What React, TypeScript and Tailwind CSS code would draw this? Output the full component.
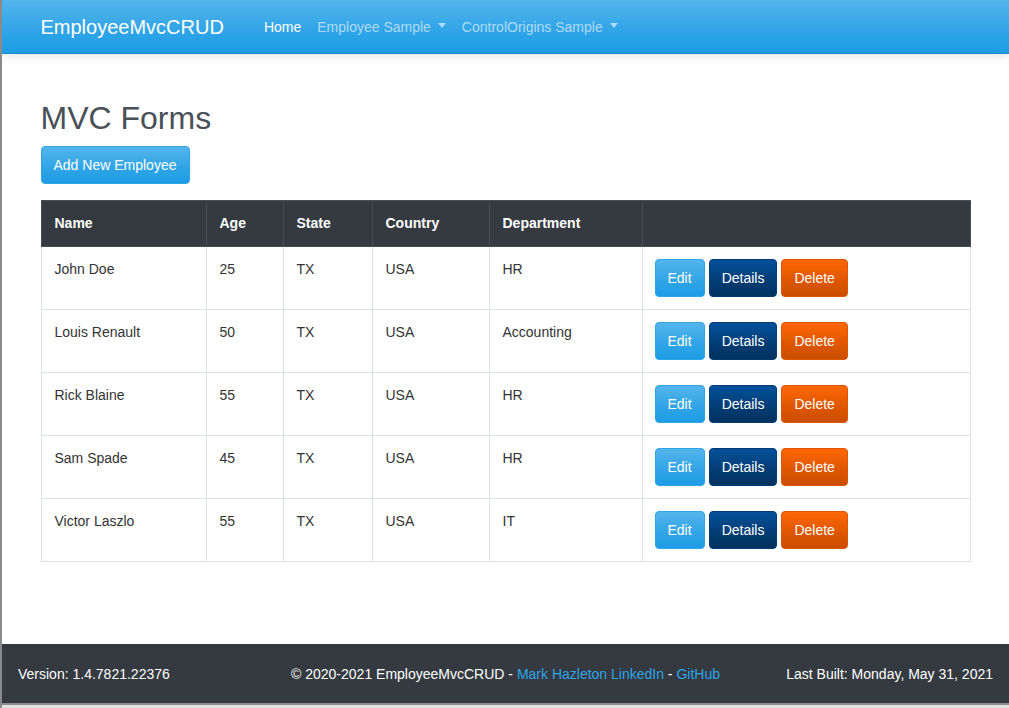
import React from 'react';

const employees = [
  { name: 'John Doe', age: 25, state: 'TX', country: 'USA', department: 'HR' },
  { name: 'Louis Renault', age: 50, state: 'TX', country: 'USA', department: 'Accounting' },
  { name: 'Rick Blaine', age: 55, state: 'TX', country: 'USA', department: 'HR' },
  { name: 'Sam Spade', age: 45, state: 'TX', country: 'USA', department: 'HR' },
  { name: 'Victor Laszlo', age: 55, state: 'TX', country: 'USA', department: 'IT' },
];

const columns = [
  { label: 'Name', w: 'w-[165px]' },
  { label: 'Age', w: 'w-[77px]' },
  { label: 'State', w: 'w-[89px]' },
  { label: 'Country', w: 'w-[117px]' },
  { label: 'Department', w: 'w-[153px]' },
  { label: '', w: '' },
];

function Caret() {
  return (
    <span className="ml-[7px] inline-block h-0 w-0 translate-y-[-2px] border-x-[4.5px] border-t-[5px] border-x-transparent border-t-white/60 align-middle" />
  );
}

function Btn({
  kind,
  wide,
  children,
}: {
  kind: 'primary' | 'info' | 'warning';
  wide?: boolean;
  children: React.ReactNode;
}) {
  const styles = {
    primary: 'border-[#2fa4e7] bg-[linear-gradient(#54b4eb,#2fa4e7_60%,#1d9ce5)]',
    info: 'border-[#033c73] bg-[linear-gradient(#04519b,#033c73_60%,#02325f)]',
    warning: 'border-[#dd5600] bg-[linear-gradient(#ff6707,#dd5600_60%,#c94e00)]',
  };
  return (
    <button
      className={`inline-flex h-[38px] items-center rounded-[4px] border text-[14px] leading-[21px] text-white ${
        wide ? 'pl-[12px] pr-[13px]' : 'px-3'
      } ${styles[kind]}`}
    >
      {children}
    </button>
  );
}

function Navbar() {
  return (
    <nav className="relative z-10 h-[54px] border-b border-[#178acc] bg-[linear-gradient(#54b4eb,#2fa4e7_60%,#1d9ce5)] shadow-[0_2px_10px_rgba(0,0,0,0.12)]">
      <div className="mx-auto flex h-full w-[960px] items-center px-[15px] pt-[1px]">
        <span className="mr-[40px] text-[20px] leading-[30px] text-white">EmployeeMvcCRUD</span>
        <span className="text-[14px] text-white">Home</span>
        <span className="ml-[16px] text-[14px] text-white/60">
          Employee Sample
          <Caret />
        </span>
        <span className="ml-[16px] text-[14px] text-white/60">
          ControlOrigins Sample
          <Caret />
        </span>
      </div>
    </nav>
  );
}

function EmployeeTable() {
  return (
    <table className="w-full table-fixed border-collapse text-[14px] leading-[21px]">
      <thead>
        <tr className="bg-[#343a40] text-white">
          {columns.map((c, i) => (
            <th key={i} className={`${c.w} border border-[#454d55] px-[13px] py-3 text-left font-bold`}>
              {c.label}
            </th>
          ))}
        </tr>
      </thead>
      <tbody>
        {employees.map((e) => (
          <tr key={e.name} className="text-[#333]">
            <td className="border border-[#dee2e6] px-[13px] py-3 align-top">{e.name}</td>
            <td className="border border-[#dee2e6] px-[13px] py-3 align-top">{e.age}</td>
            <td className="border border-[#dee2e6] px-[13px] py-3 align-top">{e.state}</td>
            <td className="border border-[#dee2e6] px-[13px] py-3 align-top">{e.country}</td>
            <td className="border border-[#dee2e6] px-[13px] py-3 align-top">{e.department}</td>
            <td className="border border-[#dee2e6] px-[12px] py-3 align-top">
              <div className="flex gap-[4px]">
                <Btn kind="primary">Edit</Btn>
                <Btn kind="info">Details</Btn>
                <Btn kind="warning">Delete</Btn>
              </div>
            </td>
          </tr>
        ))}
      </tbody>
    </table>
  );
}

export default function App() {
  return (
    <div
      className="flex h-[708px] w-full flex-col overflow-hidden border-l-2 border-[#8a8a8a] bg-white text-[14px] text-[#495057]"
      style={{ fontFamily: '"Liberation Sans", Arial, sans-serif' }}
    >
      <Navbar />
      <main className="flex-1">
        <div className="mx-auto w-[960px] px-[15px] pt-[45px]">
          <h1 className="mb-[9px] text-[32px] leading-[38px] text-[#495057]">MVC Forms</h1>
          <Btn kind="primary" wide>
            Add New Employee
          </Btn>
          <div className="mt-[16px]">
            <EmployeeTable />
          </div>
        </div>
      </main>
      <footer className="grid h-[59px] grid-cols-[1fr_auto_1fr] items-center bg-[#343a40] px-4 pt-[2px] text-[14px] text-white">
        <span className="whitespace-nowrap">Version: 1.4.7821.22376</span>
        <span className="whitespace-nowrap text-center">
          © 2020-2021 EmployeeMvcCRUD - <span className="text-[#2fa4e7]">Mark Hazleton LinkedIn</span> -{' '}
          <span className="text-[#2fa4e7]">GitHub</span>
        </span>
        <span className="whitespace-nowrap text-right">Last Built: Monday, May 31, 2021</span>
      </footer>
      <div className="h-[2px] bg-[#8a8a8a]" />
      <div className="h-[3px] bg-[#e3e3e3]" />
    </div>
  );
}
